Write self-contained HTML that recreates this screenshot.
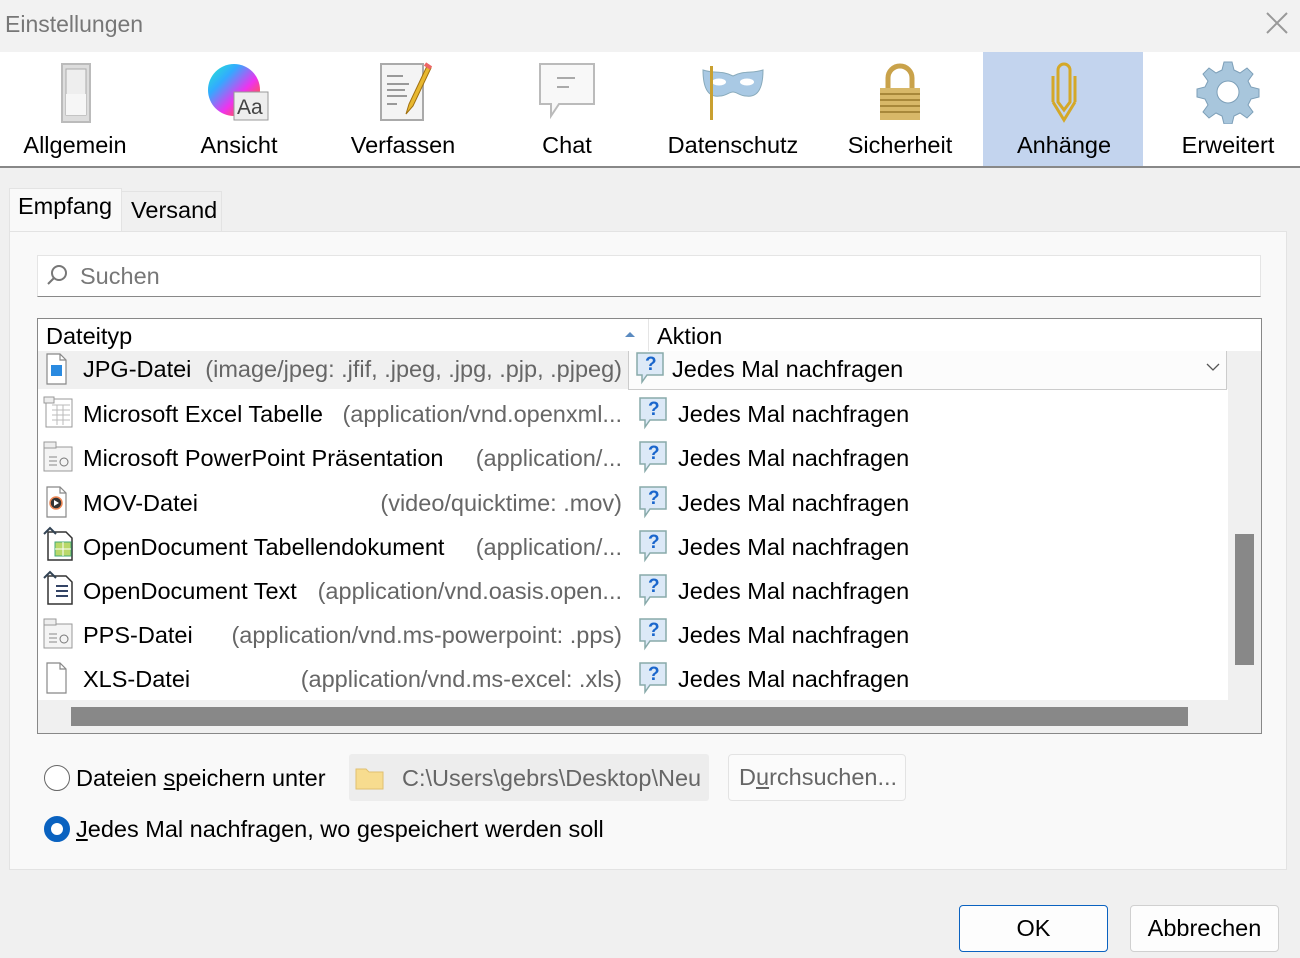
<!DOCTYPE html>
<html><head><meta charset="utf-8"><style>
*{box-sizing:border-box;margin:0;padding:0}
body{width:1300px;height:958px;background:#f0f0f0;font-family:"Liberation Sans",sans-serif;color:#000;position:relative;overflow:hidden}
.a{position:absolute;white-space:nowrap}
.tb{position:absolute;top:52px;height:115px;width:164px;text-align:center;font-size:23.5px}
.tb .l{position:absolute;left:0;right:0;top:80px}
.tb svg{position:absolute;left:50%;margin-left:-32px;top:8px}
.row{position:absolute;left:38px;width:1190px;height:44px;font-size:23.5px}
.row .ic{position:absolute;left:6px;top:6px}
.row .n{position:absolute;left:45px;top:6px}
.row .m{position:absolute;right:606px;top:6px;color:#666}
.row .q{position:absolute;left:600px;top:1px}
.row .t{position:absolute;left:640px;top:6px}
</style></head><body>
<div class="a" style="left:0;top:0;width:1300px;height:52px;background:#f2f2f2"></div>
<div class="a" style="left:5px;top:11px;font-size:23px;color:#777">Einstellungen</div>
<svg class="a" style="left:1266px;top:12px" width="22" height="22"><path d="M1 1L21 21M21 1L1 21" stroke="#999" stroke-width="2"/></svg>

<div class="a" style="left:0;top:52px;width:1300px;height:115px;background:#fff"></div>
<div class="a" style="left:983px;top:52px;width:160px;height:115px;background:#c3d4ee"></div>
<div class="a" style="left:0;top:166px;width:1300px;height:2px;background:#888"></div>

<div class="tb" style="left:-7px"><svg width="64" height="64"><rect x="19" y="4" width="28" height="58" fill="#ddd" stroke="#bbb" stroke-width="2"/><rect x="23" y="9" width="20" height="46" fill="#eee" stroke="#aaa"/><rect x="23" y="34" width="20" height="21" fill="#f6f6f6"/></svg><div class="l">Allgemein</div></div>
<div class="tb" style="left:157px"><svg width="64" height="64"><defs><linearGradient id="g1" x1="0" y1="0" x2="1" y2="1"><stop offset="0" stop-color="#2ec"/><stop offset=".3" stop-color="#3af"/><stop offset=".6" stop-color="#e3e"/><stop offset=".8" stop-color="#f55"/><stop offset="1" stop-color="#fc3"/></linearGradient></defs><circle cx="27" cy="30" r="26" fill="url(#g1)"/><rect x="27" y="32" width="34" height="28" fill="#eee" stroke="#999"/><text x="30" y="54" font-size="21" fill="#444" font-family="Liberation Sans">Aa</text></svg><div class="l">Ansicht</div></div>
<div class="tb" style="left:321px"><svg width="64" height="64"><rect x="10" y="4" width="42" height="56" fill="#f4f4f4" stroke="#aaa" stroke-width="2"/><path d="M16 16h16M16 24h22M16 30h18M16 36h20M16 44h10" stroke="#999" stroke-width="2"/><path d="M56 6L38 44l-3 10 7-8 18-38z" fill="#e8b830" stroke="#a07010"/><path d="M54 4l6 4" stroke="#e66" stroke-width="4"/></svg><div class="l">Verfassen</div></div>
<div class="tb" style="left:485px"><svg width="64" height="64"><path d="M5 4h54v40H24l-8 12v-12H5z" fill="#f8f8f8" stroke="#bbb" stroke-width="2"/><path d="M22 18h18M22 27h12" stroke="#aaa" stroke-width="2"/></svg><div class="l">Chat</div></div>
<div class="tb" style="left:651px"><svg width="64" height="64"><path d="M2 10c12 4 18 0 30 6c12-6 18-2 30-6c0 16-4 28-17 26c-6 0-9-4-13-4s-7 4-13 4C6 38 2 26 2 10z" fill="#a9c9e4" stroke="#8ab" /><ellipse cx="18" cy="22" rx="7" ry="3.5" fill="#fff"/><ellipse cx="46" cy="22" rx="7" ry="3.5" fill="#fff"/><rect x="9" y="6" width="3" height="54" fill="#c9a030"/></svg><div class="l">Datenschutz</div></div>
<div class="tb" style="left:818px"><svg width="64" height="64"><path d="M20 30V18a12 12 0 0 1 24 0v12" fill="none" stroke="#c9a24a" stroke-width="5"/><rect x="12" y="28" width="40" height="32" fill="#d8b868"/><path d="M12 34h40M12 40h40M12 46h40M12 52h40" stroke="#a8883a" stroke-width="2"/></svg><div class="l">Sicherheit</div></div>
<div class="tb" style="left:982px"><svg width="64" height="64"><path d="M26 42V10a6 6 0 0 1 12 0v32l-6 8-6-8zM21 42V16M43 42V16M21 42l11 18 11-18" fill="none" stroke="#d4a828" stroke-width="3"/></svg><div class="l">Anhänge</div></div>
<div class="tb" style="left:1146px"><svg width="64" height="64"><g transform="translate(32,32)" fill="#a8c6dc" stroke="#7d9fb8"><path d="M-4-30h8l2 8 6 3 7-5 6 6-5 7 3 6 8 2v8l-8 2-3 6 5 7-6 6-7-5-6 3-2 8h-8l-2-8-6-3-7 5-6-6 5-7-3-6-8-2v-8l8-2 3-6-5-7 6-6 7 5 6-3z"/><circle r="11" fill="#fff"/></g></svg><div class="l">Erweitert</div></div>

<div class="a" style="left:9px;top:188px;width:113px;height:44px;background:#f9f9f9;border:1px solid #e3e3e3;border-bottom:none"></div>
<div class="a" style="left:18px;top:193px;font-size:23.5px">Empfang</div>
<div class="a" style="left:121px;top:191px;width:101px;height:40px;background:#f0f0f0;border:1px solid #e3e3e3;border-bottom:none"></div>
<div class="a" style="left:131px;top:197px;font-size:23.5px">Versand</div>
<div class="a" style="left:9px;top:231px;width:1278px;height:639px;background:#f9f9f9;border:1px solid #e3e3e3"></div>

<div class="a" style="left:37px;top:255px;width:1224px;height:42px;background:#fff;border:1px solid #e5e5e5;border-bottom:1px solid #888"></div>
<svg class="a" style="left:45px;top:263px" width="24" height="24"><circle cx="14" cy="10" r="7" fill="none" stroke="#777" stroke-width="2"/><path d="M9 15L3 21" stroke="#777" stroke-width="2"/></svg>
<div class="a" style="left:80px;top:263px;font-size:23.5px;color:#777">Suchen</div>

<div class="a" style="left:37px;top:318px;width:1225px;height:416px;background:#f0f0f0;border:1px solid #888"></div>
<div class="a" style="left:38px;top:319px;width:1223px;height:32px;background:#fff"></div>
<div class="a" style="left:648px;top:319px;width:1px;height:32px;background:#e5e5e5"></div>
<div class="a" style="left:46px;top:323px;font-size:23.5px">Dateityp</div>
<svg class="a" style="left:624px;top:330px" width="12" height="8"><path d="M1 7L6 2l5 5z" fill="#5a8ac0"/></svg>
<div class="a" style="left:657px;top:323px;font-size:23.5px">Aktion</div>
<div class="a" style="left:38px;top:351px;width:1190px;height:349px;background:#fff"></div>
<div class="a" style="left:1235px;top:534px;width:19px;height:131px;background:#888"></div>
<div class="a" style="left:71px;top:707px;width:1117px;height:19px;background:#888"></div>

<div class="row" style="top:351px;height:38px;background:#f0f0f0"></div>
<div class="a" style="left:628px;top:351px;width:599px;height:39px;background:#fcfcfc;border:1px solid #ccc;border-top:none"></div>
<svg class="a" style="left:1205px;top:361px" width="16" height="12"><path d="M2 3l6 6 6-6" fill="none" stroke="#555" stroke-width="1.3"/></svg>

<svg width="0" height="0" style="position:absolute"><defs>
<g id="q"><path d="M2 2h26v22H12l-5 7v-7H2z" fill="#dce9f7" stroke="#8aa" stroke-width="1.5"/><text x="10" y="19" font-size="19" font-weight="bold" fill="#1a66cc" font-family="Liberation Sans">?</text></g>
<g id="doc"><path d="M3 1h13l6 6v24H3z" fill="#fff" stroke="#888" stroke-width="1.2"/><path d="M16 1v6h6" fill="none" stroke="#888" stroke-width="1.2"/></g>
</defs></svg>

<div class="row" style="top:351px"><svg class="ic" style="top:2px" width="26" height="32"><use href="#doc"/><rect x="7" y="12" width="11" height="11" fill="#2a8ae0"/></svg><span class="n" style="top:5px">JPG-Datei</span><span class="m" style="top:5px">(image/jpeg: .jfif, .jpeg, .jpg, .pjp, .pjpeg)</span><svg class="q" style="left:597px;top:0" width="32" height="34"><use href="#q"/></svg><span class="t" style="left:634px;top:5px">Jedes Mal nachfragen</span></div>
<div class="row" style="top:395px"><svg class="ic" style="left:4px;top:0" width="32" height="34"><rect x="4" y="4" width="26" height="28" fill="#fff" stroke="#999"/><path d="M10 10h18M10 15h18M10 20h18M10 25h18M15 10v20M21 10v20" stroke="#bbb"/><rect x="2" y="2" width="10" height="6" fill="#eee" stroke="#999"/></svg><span class="n">Microsoft Excel Tabelle</span><span class="m">(application/vnd.openxml...</span><svg class="q" width="32" height="34"><use href="#q"/></svg><span class="t">Jedes Mal nachfragen</span></div>
<div class="row" style="top:439px"><svg class="ic" style="left:4px;top:0" width="32" height="34"><rect x="2" y="8" width="28" height="24" fill="#f4f4f4" stroke="#999"/><rect x="2" y="3" width="12" height="6" fill="#eee" stroke="#999"/><path d="M7 18h8M7 22h8M7 26h8" stroke="#888"/><circle cx="22" cy="23" r="4" fill="none" stroke="#777"/></svg><span class="n">Microsoft PowerPoint Präsentation</span><span class="m">(application/...</span><svg class="q" width="32" height="34"><use href="#q"/></svg><span class="t">Jedes Mal nachfragen</span></div>
<div class="row" style="top:484px"><svg class="ic" style="top:2px" width="26" height="32"><use href="#doc"/><circle cx="12" cy="17" r="6" fill="#333"/><circle cx="12" cy="17" r="6" fill="none" stroke="#e85" stroke-width="1.5"/><path d="M10 14l5 3-5 3z" fill="#fff"/></svg><span class="n">MOV-Datei</span><span class="m">(video/quicktime: .mov)</span><svg class="q" width="32" height="34"><use href="#q"/></svg><span class="t">Jedes Mal nachfragen</span></div>
<div class="row" style="top:528px"><svg class="ic" style="left:4px;top:-2px" width="34" height="36"><path d="M6 6h18l6 6v22H6z" fill="#fff" stroke="#333" stroke-width="1.5"/><rect x="13" y="16" width="16" height="14" fill="#b9d86a" stroke="#4a7"/><path d="M13 23h16M21 16v14" stroke="#fff"/><path d="M2 8l6-6 6 6" fill="none" stroke="#345" stroke-width="2"/></svg><span class="n">OpenDocument Tabellendokument</span><span class="m">(application/...</span><svg class="q" width="32" height="34"><use href="#q"/></svg><span class="t">Jedes Mal nachfragen</span></div>
<div class="row" style="top:572px"><svg class="ic" style="left:4px;top:-2px" width="34" height="36"><path d="M6 6h18l6 6v22H6z" fill="#fff" stroke="#333" stroke-width="1.5"/><path d="M14 16h12M14 21h12M14 26h12" stroke="#346" stroke-width="2"/><path d="M2 8l6-6 6 6" fill="none" stroke="#345" stroke-width="2"/></svg><span class="n">OpenDocument Text</span><span class="m">(application/vnd.oasis.open...</span><svg class="q" width="32" height="34"><use href="#q"/></svg><span class="t">Jedes Mal nachfragen</span></div>
<div class="row" style="top:616px"><svg class="ic" style="left:4px;top:0" width="32" height="34"><rect x="2" y="8" width="28" height="24" fill="#f4f4f4" stroke="#999"/><rect x="2" y="3" width="12" height="6" fill="#eee" stroke="#999"/><path d="M7 18h8M7 22h8M7 26h8" stroke="#888"/><circle cx="22" cy="23" r="4" fill="none" stroke="#777"/></svg><span class="n">PPS-Datei</span><span class="m">(application/vnd.ms-powerpoint: .pps)</span><svg class="q" width="32" height="34"><use href="#q"/></svg><span class="t">Jedes Mal nachfragen</span></div>
<div class="row" style="top:660px"><svg class="ic" style="top:2px" width="26" height="32"><use href="#doc"/></svg><span class="n">XLS-Datei</span><span class="m">(application/vnd.ms-excel: .xls)</span><svg class="q" width="32" height="34"><use href="#q"/></svg><span class="t">Jedes Mal nachfragen</span></div>

<div class="a" style="left:44px;top:765px;width:26px;height:26px;border:1.5px solid #666;border-radius:50%;background:#fff"></div>
<div class="a" style="left:76px;top:765px;font-size:23.5px">Dateien <u>s</u>peichern unter</div>
<div class="a" style="left:349px;top:754px;width:360px;height:47px;background:#ededed;border-radius:3px"></div>
<svg class="a" style="left:355px;top:766px" width="30" height="24"><path d="M1 3h10l3 3h14v17H1z" fill="#f7dc8f" stroke="#e0c070"/></svg>
<div class="a" style="left:402px;top:765px;width:300px;overflow:hidden;font-size:23.5px;color:#666">C:\Users\gebrs\Desktop\Neu</div>
<div class="a" style="left:728px;top:754px;width:178px;height:47px;background:#fbfbfb;border:1px solid #e3e3e3;border-radius:4px"></div>
<div class="a" style="left:739px;top:764px;font-size:23.5px;color:#666">D<u>u</u>rchsuchen...</div>
<div class="a" style="left:44px;top:816px;width:26px;height:26px;border-radius:50%;border:7px solid #0a62c0;background:#fff"></div>
<div class="a" style="left:76px;top:816px;font-size:23.5px"><u>J</u>edes Mal nachfragen, wo gespeichert werden soll</div>

<div class="a" style="left:959px;top:905px;width:149px;height:47px;background:#fdfdfd;border:1px solid #0a62c0;border-radius:4px;font-size:23.5px;text-align:center;line-height:45px">OK</div>
<div class="a" style="left:1130px;top:905px;width:149px;height:47px;background:#fdfdfd;border:1px solid #d0d0d0;border-radius:4px;font-size:23.5px;text-align:center;line-height:45px">Abbrechen</div>
</body></html>
